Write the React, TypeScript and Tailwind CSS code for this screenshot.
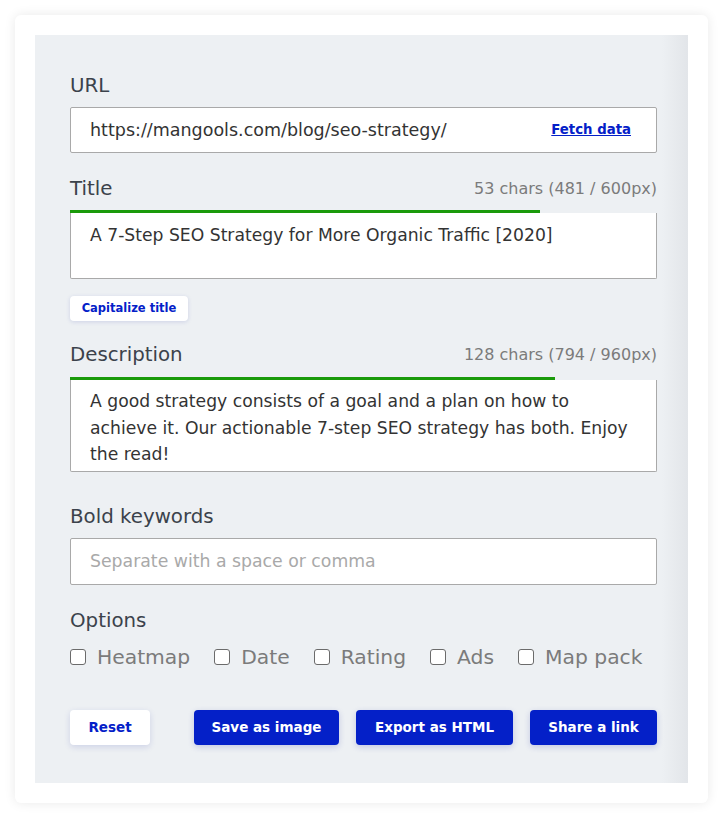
import React from "react";

const font = { fontFamily: '"DejaVu Sans", "Noto Sans", sans-serif' };

function Label({ text, right }: { text: string; right?: string }) {
  return (
    <div className="flex h-[24px] items-center justify-between pt-[2px]">
      <span className="text-[19.8px] text-[#3b424b]">{text}</span>
      {right && <span className="text-[16px] text-[#7b7b7b]">{right}</span>}
    </div>
  );
}

function Check({ label }: { label: string }) {
  return (
    <div className="flex items-center gap-[11px]">
      <span className="block h-[16px] w-[16px] rounded-[3px] border border-[#6b6b6b] bg-white" />
      <span className="text-[20.3px] text-[#7b7b7b]">{label}</span>
    </div>
  );
}

export default function App() {
  return (
    <div className="min-h-screen bg-white p-[15px]" style={font}>
      <div className="rounded-[6px] bg-white p-5 shadow-[0_0_12px_rgba(0,0,0,0.09)]">
        <div className="bg-[linear-gradient(to_right,#edf0f3_96%,#e2e5e9)] pb-[38px] pl-[35px] pr-[31px] pt-[38px]">
          <Label text="URL" />
          <div className="mt-[10px] flex h-[46px] items-center justify-between rounded-[2px] border border-[#a9a9a9] bg-white pl-[19px] pr-[25px]">
            <span className="text-[17.5px] text-[#333]">https://mangools.com/blog/seo-strategy/</span>
            <span className="text-[13.3px] font-bold text-[#0420c8] underline">Fetch data</span>
          </div>

          <div className="mt-[23px]">
            <Label text="Title" right="53 chars (481 / 600px)" />
          </div>
          <div className="mt-[10px] h-[3px] w-[470px] bg-[#1a9a0a]" />
          <div className="h-[66px] rounded-b-[2px] border border-t-0 border-[#a9a9a9] bg-white px-[19px] pt-[10px]">
            <span className="text-[17.2px] text-[#333]">A 7-Step SEO Strategy for More Organic Traffic [2020]</span>
          </div>

          <button className="mt-[17px] flex h-[25px] w-[118px] items-center justify-center rounded-[4px] bg-white text-[11.5px] font-bold text-[#0420c8] shadow-[0_1px_4px_rgba(30,40,160,0.15)]">
            Capitalize title
          </button>

          <div className="mt-[21px]">
            <Label text="Description" right="128 chars (794 / 960px)" />
          </div>
          <div className="mt-[11px] h-[3px] w-[485px] bg-[#1a9a0a]" />
          <div className="h-[92px] rounded-b-[2px] border border-t-0 border-[#a9a9a9] bg-white px-[19px] pt-[8px] text-[17.2px] leading-[26.5px] text-[#333]">
            A good strategy consists of a goal and a plan on how to
            <br />
            achieve it. Our actionable 7-step SEO strategy has both. Enjoy
            <br />
            the read!
          </div>

          <div className="mt-[32px]">
            <Label text="Bold keywords" />
          </div>
          <div className="mt-[10px] flex h-[47px] items-center rounded-[2px] border border-[#a9a9a9] bg-white px-[19px]">
            <span className="text-[17.3px] text-[#a9a9a9]">Separate with a space or comma</span>
          </div>

          <div className="mt-[23px]">
            <Label text="Options" />
          </div>
          <div className="mt-[13px] flex h-[24px] items-center gap-[24px]">
            <Check label="Heatmap" />
            <Check label="Date" />
            <Check label="Rating" />
            <Check label="Ads" />
            <Check label="Map pack" />
          </div>

          <div className="mt-[41px] flex items-center justify-between">
            <button className="flex h-[35px] w-[80px] items-center justify-center rounded-[4px] bg-white text-[13.5px] font-bold text-[#0420c8] shadow-[0_2px_6px_rgba(30,40,160,0.15)]">
              Reset
            </button>
            <div className="flex gap-[17px]">
              <button className="flex h-[35px] w-[145px] items-center justify-center rounded-[4px] bg-[#0420c8] text-[13.5px] font-bold text-white shadow-[0_2px_6px_rgba(30,40,160,0.2)]">
                Save as image
              </button>
              <button className="flex h-[35px] w-[157px] items-center justify-center rounded-[4px] bg-[#0420c8] text-[13.5px] font-bold text-white shadow-[0_2px_6px_rgba(30,40,160,0.2)]">
                Export as HTML
              </button>
              <button className="flex h-[35px] w-[127px] items-center justify-center rounded-[4px] bg-[#0420c8] text-[13.5px] font-bold text-white shadow-[0_2px_6px_rgba(30,40,160,0.2)]">
                Share a link
              </button>
            </div>
          </div>
        </div>
      </div>
    </div>
  );
}
